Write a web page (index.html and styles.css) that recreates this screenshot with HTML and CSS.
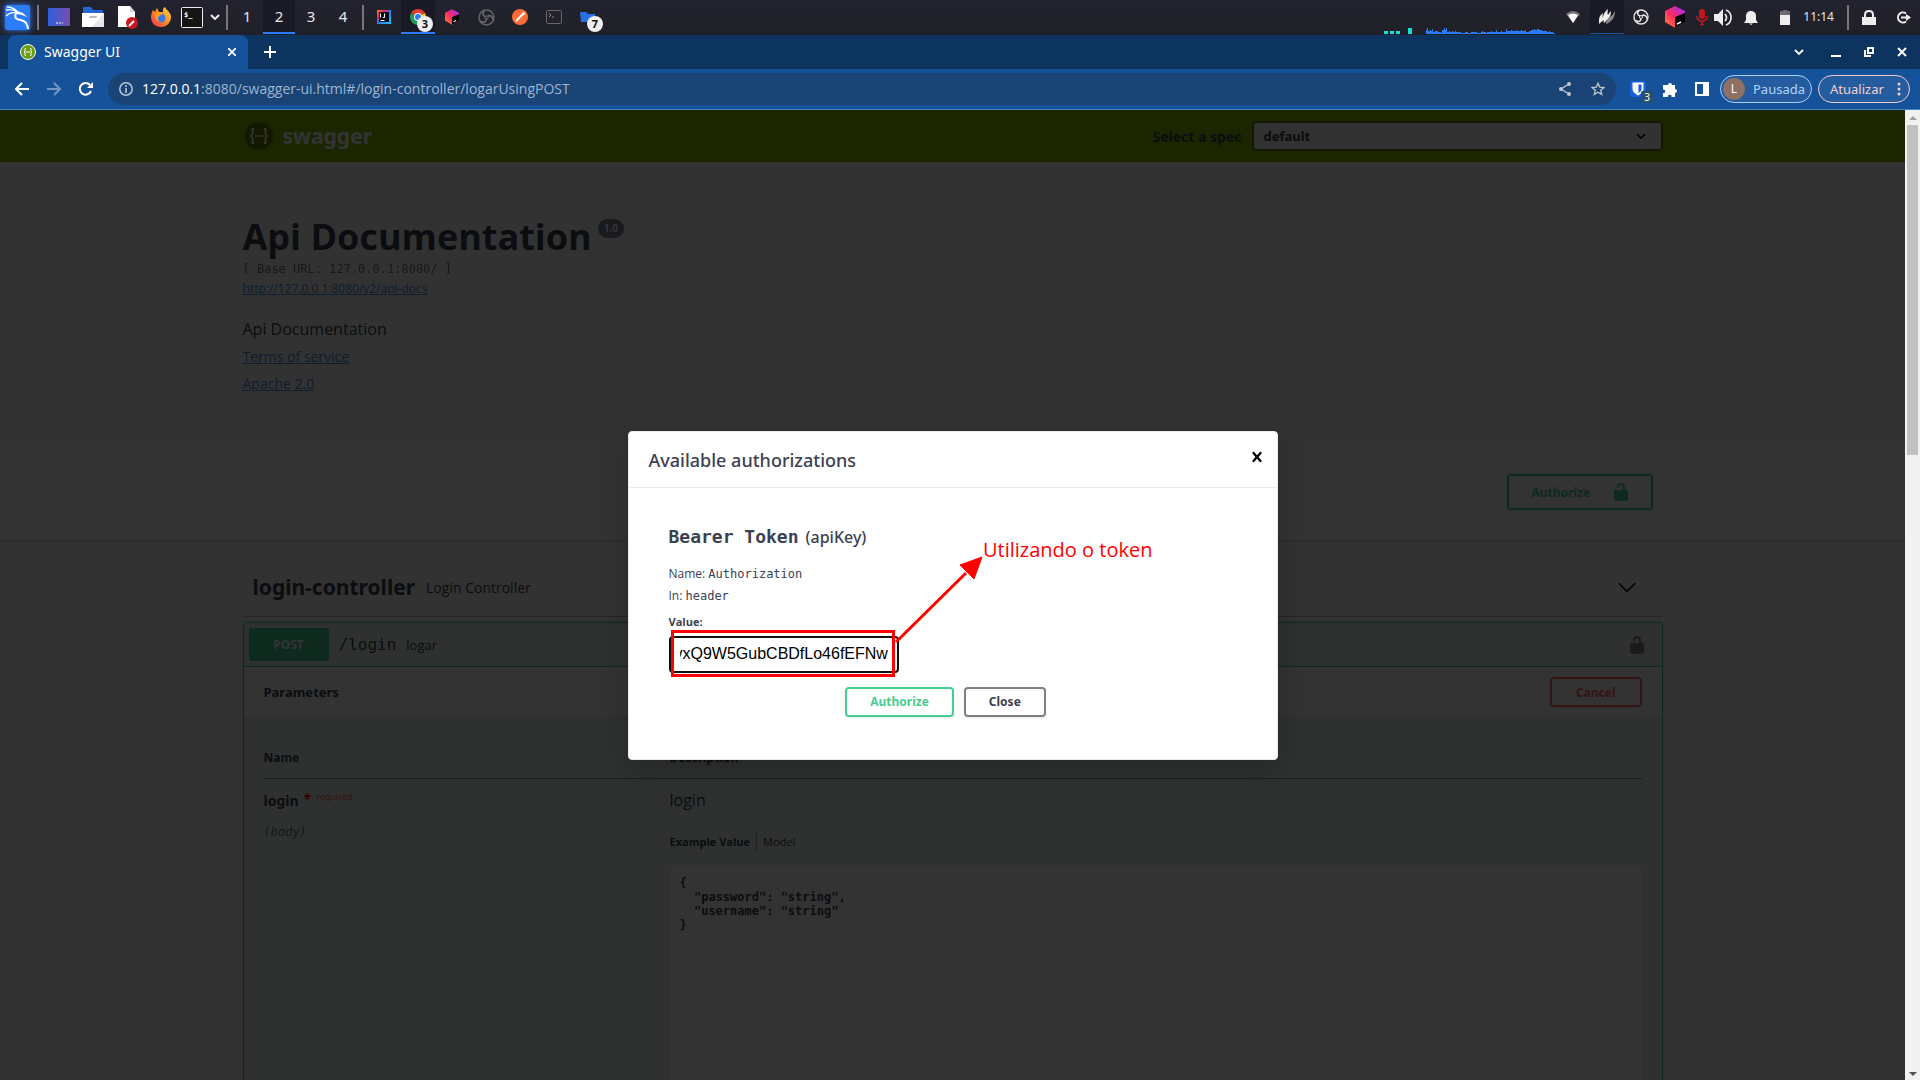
FILE: index.html
```html
<!DOCTYPE html>
<html lang="pt-BR">
<head>
<meta charset="utf-8">
<title>Swagger UI</title>
<link rel="stylesheet" href="styles.css">
</head>
<body>
<svg class="defs" aria-hidden="true">
  <symbol id="unlock" viewBox="0 0 20 20"><path d="M15.8 8H14V5.6C14 2.703 12.665 1 10 1 7.334 1 6 2.703 6 5.6V6h2v-.801C8 3.754 8.797 3 10 3c1.203 0 2 .754 2 2.199V8H4c-.553 0-1 .646-1 1.199V17c0 .549.428 1.139.951 1.307l1.197.387C5.672 18.861 6.55 19 7.1 19h5.8c.549 0 1.428-.139 1.951-.307l1.196-.387c.524-.167.953-.757.953-1.306V9.199C17 8.646 16.352 8 15.8 8z"/></symbol>
  <linearGradient id="g-desk" x1="0" y1="0" x2="1" y2="0"><stop offset="0" stop-color="#2c62dc"/><stop offset="1" stop-color="#7b4bb0"/></linearGradient>
  <linearGradient id="g-jb" x1="0" y1="1" x2="1" y2="0"><stop offset="0" stop-color="#ff8a2a"/><stop offset=".45" stop-color="#ff2b62"/><stop offset="1" stop-color="#9a2cff"/></linearGradient>
  <linearGradient id="g-ij" x1="0" y1="0" x2="1" y2="1"><stop offset="0" stop-color="#fc801d"/><stop offset=".3" stop-color="#e8265f"/><stop offset=".5" stop-color="#2b7cf6"/><stop offset="1" stop-color="#19c3f5"/></linearGradient>
  <linearGradient id="g-fox" x1="1" y1="0" x2="0" y2="1"><stop offset="0" stop-color="#ffe03a"/><stop offset=".5" stop-color="#ff8a20"/><stop offset="1" stop-color="#f2255a"/></linearGradient>
  <symbol id="cube" viewBox="0 0 20 22"><path d="M10 0l10 5v11l-10 6-10-6V5z" fill="url(#g-jb)"/><path d="M10 11l10-4v9l-10 6z" fill="#000"/><path d="M12 18l4-2" stroke="#fff" stroke-width="1.5"/></symbol>
  <symbol id="obs" viewBox="0 0 16 16"><g fill="none" stroke="currentColor"><circle cx="8" cy="8" r="7" stroke-width="1.400"/><path d="M7 7C4 6 4 3 6 2M9 7c2-2 5 0 5 3M8 9.500c0 3-3 4-5 2" stroke-width="1.600"/><circle cx="8" cy="8" r="1.500"/></g></symbol>
</svg>

<header class="taskbar">
  <button class="slot" aria-label="Applications"><svg class="kali" width="25" height="25" viewBox="0 0 25 25"><rect width="25" height="25" rx="2" fill="#2a7cf8"/><path d="M2 2c5 0 8 2 11 5M1 5c4-1 8 0 11 2M1 11c3-3 7-4 11-3" fill="none" stroke="#fff" stroke-width="1.300"/><path d="M13 7c-3 1-4 5-1 7 3 1 7 1 9 4 1 2 2 4 2 6" fill="none" stroke="#fff" stroke-width="2"/><path d="M12 6l6 2 4 4-5-2-5-1z" fill="#fff"/></svg></button>
  <i class="rule"></i>
  <button class="slot" aria-label="Desktop"><svg width="22" height="18" viewBox="0 0 22 18"><rect width="22" height="18" rx="1" fill="url(#g-desk)"/><path d="M8 15h2M11 15h2M14 15h1" stroke="#fff"/></svg></button>
  <button class="slot" aria-label="Files"><svg width="22" height="20" viewBox="0 0 22 20"><path d="M1 1q0-1 1-1h7l2 3h9q1 0 1 1v4H1z" fill="#2666d6"/><path d="M0 6h22v14H0z" fill="#fff"/><path d="M22 6v14H10z" fill="#e8e8e8"/><rect x="7" y="9" width="8" height="2" rx="1" fill="#bbb"/></svg></button>
  <button class="slot" aria-label="Text editor"><svg width="22" height="24" viewBox="0 0 22 24"><path d="M2 1h12l5 6v15H2z" fill="#fff"/><path d="M14 1l5 6h-5z" fill="#d5d5d5"/><circle cx="16" cy="18" r="6" fill="#c9171e"/><path d="M13 21l5-5" stroke="#fff" stroke-width="2"/></svg></button>
  <button class="slot" aria-label="Firefox"><svg width="22" height="22" viewBox="0 0 22 22"><path d="M11 21C5 21 1 17 1 11c0-3 1-5 2-7l2 2 2-4 2 4 4 0c0-3 0-4 2-5 1 3 6 5 6 10s-4 10-10 10z" fill="url(#g-fox)"/><circle cx="11" cy="12" r="4.500" fill="#3f78e8"/><path d="M5 8l5-2 3 2-4 2c-2 2-1 5 2 6-4 0-7-3-6-8z" fill="#ff9a20"/></svg></button>
  <button class="slot slot-term" aria-label="Terminal"><svg width="22" height="21" viewBox="0 0 22 21"><rect x=".5" y=".5" width="21" height="20" rx="1" fill="#151515" stroke="#eee"/><text class="prompt" x="3" y="10">$_</text></svg></button>
  <button class="slot slot-chev" aria-label="More terminals"><svg width="10" height="6" viewBox="0 0 10 6"><path d="M1 1l4 4 4-4" fill="none" stroke="#eee" stroke-width="2"/></svg></button>
  <i class="rule"></i>
  <nav class="spaces" aria-label="Workspaces">
    <button>1</button><button class="active">2</button><button>3</button><button>4</button>
  </nav>
  <i class="rule"></i>
  <button class="slot" aria-label="IntelliJ IDEA"><svg width="14" height="14" viewBox="0 0 14 14"><rect width="14" height="14" fill="url(#g-ij)"/><rect x="2" y="2" width="10" height="10" fill="#0a0a14"/><path d="M3.500 3.500v4M6 7.500h1.500v-4M3.500 10.500h4" fill="none" stroke="#fff"/></svg></button>
  <button class="slot active" aria-label="Chrome"><svg width="16" height="16" viewBox="0 0 16 16"><path d="M8 8L1.100 4A8 8 0 0 1 14.900 4z" fill="#e33b2e"/><path d="M8 8L14.900 4A8 8 0 0 1 8 16z" fill="#fcc934"/><path d="M8 8v8A8 8 0 0 1 1.100 4z" fill="#1e9b50"/><circle cx="8" cy="8" r="4" fill="#fff"/><circle cx="8" cy="8" r="3" fill="#2c78ee"/></svg><span class="count">3</span></button>
  <button class="slot" aria-label="JetBrains Toolbox"><svg width="14" height="16"><use href="#cube"/></svg></button>
  <button class="slot dim" aria-label="OBS"><svg width="17" height="17"><use href="#obs"/></svg></button>
  <button class="slot" aria-label="Postman"><svg width="16" height="16" viewBox="0 0 16 16"><circle cx="8" cy="8" r="8" fill="#ff6c37"/><path d="M4 12l7-7" stroke="#fff" stroke-width="2"/><circle cx="11.500" cy="4.500" r="1.500" fill="#fff"/></svg></button>
  <button class="slot" aria-label="Terminal window"><svg width="16" height="14" viewBox="0 0 16 14"><rect x=".5" y=".5" width="15" height="13" rx="1" fill="#22232c" stroke="#66666c"/><path d="M3 3l2 2-2 2M6 7h2" fill="none" stroke="#88888c"/></svg></button>
  <button class="slot" aria-label="File manager"><svg width="16" height="14" viewBox="0 0 16 14"><path d="M0 2h6l2 2h7v8H1z" fill="#2a6fe6"/></svg><span class="count">7</span></button>

  <div class="tray">
    <svg class="graph" width="172" height="7" viewBox="0 0 172 7" shape-rendering="crispEdges"><path d="M0 4h4v3H0zM6 4h4v3H6zM12 4h4v3h-4zM24 1h4v6h-4z" fill="#0fe0d0"/><path d="M42 7V3h1V1h1v3h2V3h1v1h1V2h1v3h2V4h3v1h3v1h1V3h2V1h1v2h1V1h1v4h2V4h1v1h2V4h1v1h2V4h1v1h5v1h4V5h3v1h3V5h6v1h4V5h1V4h1v1h3v1h1V5h4V4h1v1h4V3h1v2h4V4h1v1h4V2h1v2h4V3h1v1h4V3h1v1h4V3h1v1h3V3h1v2h3V4h2V3h3V2h1v1h2V2h2v1h3v1h5v1h2V4h1v1h3v1h2v1z" fill="#2a7cf8"/></svg>
    <button class="slot" aria-label="Network"><svg width="14" height="13" viewBox="0 0 14 13"><path d="M0 3Q7-3 14 3l-7 9z" fill="#777"/><path d="M2 4q5-3 10 0l-5 8z" fill="#fff"/></svg></button>
    <button class="slot active-soft" aria-label="Hawk"><svg width="16" height="16" viewBox="0 0 16 16"><path d="M7 15q-1-2 3-6 4-3 6-7 0 6-3 9t-6 4z" fill="#888"/><path d="M0 15V11q0-4 4-7-1 3 0 5 0-5 5-9-1 4 0 6 1-2 3-4 0 5-3 8t-4 4q-1-1 0-3-3 2-5 4z" fill="#eee"/></svg></button>
    <button class="slot" aria-label="OBS"><svg width="16" height="16"><use href="#obs"/></svg></button>
    <button class="slot" aria-label="Toolbox"><svg width="20" height="22"><use href="#cube"/></svg></button>
    <button class="slot slot-mic" aria-label="Microphone"><svg width="12" height="17" viewBox="0 0 12 17"><rect x="3" width="6" height="10" rx="3" fill="#c0181c"/><path d="M1 7q0 5 5 5t5-5M6 12v4M4 15.500h4" fill="none" stroke="#c0181c" stroke-width="1.600"/></svg></button>
    <button class="slot slot-vol" aria-label="Volume"><svg width="18" height="17" viewBox="0 0 18 17"><path d="M0 5h4l5-5v17l-5-5H0z" fill="#eee"/><path d="M11 5q3 3.500 0 7M12 1q5 2 5 7.500T12 16" fill="none" stroke="#eee" stroke-width="1.600"/></svg></button>
    <button class="slot" aria-label="Notifications"><svg width="14" height="15" viewBox="0 0 14 15"><path d="M6 1h2q4 1 4 5v4l2 3H0l2-3V6q0-4 4-5zM5 13.500h4L7 15z" fill="#eee"/></svg></button>
    <button class="slot" aria-label="Battery"><svg width="10" height="15" viewBox="0 0 10 15"><path d="M0 1h3V0h4v1h3v5H0z" fill="#6b6b70"/><path d="M0 5h10v10H0z" fill="#eee"/></svg></button>
    <time class="clock">11:14</time>
    <i class="rule"></i>
    <button class="slot" aria-label="Lock screen"><svg width="14" height="15" viewBox="0 0 14 15"><path d="M0 7h14v8H0z" fill="#eee"/><path d="M3 8V5q0-4 4-4t4 4v3" fill="none" stroke="#eee" stroke-width="2"/></svg></button>
    <button class="slot" aria-label="Log out"><svg width="15" height="13" viewBox="0 0 15 13"><path d="M10 2.500A5 5 0 1 0 10 10.500" fill="none" stroke="#eee" stroke-width="2"/><path d="M5 5.500h5V3l5 3.500L10 10V7.500H5z" fill="#eee"/></svg></button>
  </div>
</header>

<div class="tabstrip">
  <div class="tab">
    <svg width="16" height="16" viewBox="0 0 16 16"><circle cx="8" cy="8" r="7.500" fill="#6a9c10" stroke="#fff"/><path d="M6 4.500H5v3L4 8l1 .5v3h1M10 4.500h1v3l1 .5-1 .5v3h-1M6 8h4" fill="none" stroke="#fff"/></svg>
    <span class="tab-title">Swagger UI</span>
    <button aria-label="Close tab"><svg width="8" height="8" viewBox="0 0 8 8"><path d="M0 0l8 8M8 0L0 8" stroke="#fff" stroke-width="1.800"/></svg></button>
  </div>
  <button class="newtab" aria-label="New tab"><svg width="12" height="12" viewBox="0 0 12 12"><path d="M6 0v12M0 6h12" stroke="#fff" stroke-width="2"/></svg></button>
  <div class="wincontrols">
    <button aria-label="Search tabs"><svg width="10" height="7" viewBox="0 0 10 7"><path d="M1 1l4 4 4-4" fill="none" stroke="#fff" stroke-width="1.800"/></svg></button>
    <button aria-label="Minimize"><svg width="10" height="10" viewBox="0 0 10 10"><path d="M0 9h10" stroke="#fff" stroke-width="2"/></svg></button>
    <button aria-label="Restore"><svg width="10" height="10" viewBox="0 0 10 10"><path d="M4 1h5v5H4zM1 3v6h6" fill="none" stroke="#fff" stroke-width="2"/></svg></button>
    <button aria-label="Close window"><svg width="10" height="10" viewBox="0 0 10 10"><path d="M1 1l8 8M9 1L1 9" stroke="#fff" stroke-width="2"/></svg></button>
  </div>
</div>

<div class="toolbar">
  <button aria-label="Back"><svg width="14" height="14" viewBox="0 0 14 14"><path d="M14 7H1M7 1L1 7l6 6" fill="none" stroke="#fff" stroke-width="2"/></svg></button>
  <button aria-label="Forward"><svg width="14" height="14" viewBox="0 0 14 14"><path d="M0 7h13M7 1l6 6-6 6" fill="none" stroke="#7297c4" stroke-width="2"/></svg></button>
  <button aria-label="Reload"><svg width="14" height="14" viewBox="0 0 14 14"><path d="M12 9A5.800 5.800 0 1 1 11 3" fill="none" stroke="#fff" stroke-width="2"/><path d="M14 0v6H8z" fill="#fff"/></svg></button>
  <div class="omnibox">
    <svg width="14" height="14" viewBox="0 0 14 14"><circle cx="7" cy="7" r="6.200" fill="none" stroke="#b9c6d6" stroke-width="1.500"/><path d="M7 6v5M7 3v2" stroke="#b9c6d6" stroke-width="1.600"/></svg>
    <span class="url"><b>127.0.0.1</b>:8080/swagger-ui.html#/login-controller/logarUsingPOST</span>
    <button aria-label="Share"><svg width="12" height="14" viewBox="0 0 12 14"><path d="M10 2L2 7l8 5" fill="none" stroke="#c3c8ce" stroke-width="1.400"/><g fill="#c3c8ce"><circle cx="10" cy="2" r="2"/><circle cx="2" cy="7" r="2"/><circle cx="10" cy="12" r="2"/></g></svg></button>
    <button aria-label="Bookmark"><svg width="14" height="14" viewBox="0 0 14 14"><path d="M7 1.200l1.700 3.900 4.200.4-3.200 2.800 1 4.200L7 10.300l-3.700 2.200 1-4.200L1.100 5.500l4.200-.4z" fill="none" stroke="#c3c8ce" stroke-width="1.300"/></svg></button>
  </div>
  <button class="ext" aria-label="Bitwarden"><svg width="16" height="16" viewBox="0 0 16 16"><rect width="16" height="16" rx="2" fill="#175ddc"/><path d="M2.500 1.500h11V8c0 3-3 5-5.500 6.500C5.500 13 2.500 11 2.500 8z" fill="#fff"/><path d="M8.500 3.500h3V8c0 2-1.500 3-3 4z" fill="#175ddc"/></svg><span class="ext-count">3</span></button>
  <button class="ext" aria-label="Extensions"><svg width="15" height="15" viewBox="0 0 15 15"><path d="M1 3h4a2 2 0 1 1 4 0h3v4a2 2 0 1 1 0 4v4H8.500a1.800 1.800 0 1 0-3.500 0H0v-4a1.800 1.800 0 1 0 0-3.500V3z" fill="#fff"/></svg></button>
  <button class="ext" aria-label="Side panel"><svg width="14" height="14" viewBox="0 0 14 14"><path d="M0 0h14v14H0zM2 2v10h6V2z" fill="#fff" fill-rule="evenodd"/></svg></button>
  <button class="pill pill-user"><span class="avatar">L</span>Pausada</button>
  <button class="pill pill-update">Atualizar<svg width="4" height="14" viewBox="0 0 4 14"><g fill="#f6cfd0"><circle cx="2" cy="2" r="1.500"/><circle cx="2" cy="7" r="1.500"/><circle cx="2" cy="12" r="1.500"/></g></svg></button>
</div>

<div class="viewport">
  <div class="page">
    <div class="topbar">
      <div class="wrapper topbar-row">
        <a class="brand" href="#"><svg width="30" height="30" viewBox="0 0 30 30"><circle cx="15" cy="15" r="14" fill="#5b7f02"/><path d="M10 8H8.500v5L7 15l1.500 2v5H10M20 8h1.500v5l1.500 2-1.500 2v5H20" fill="none" stroke="#fff" stroke-width="1.800"/><path d="M11 15h2M14 15h2M17 15h2" stroke="#fff" stroke-width="2"/></svg>swagger</a>
        <label class="spec" for="spec">Select a spec</label>
        <div class="spec-box">
          <select id="spec"><option>default</option></select>
          <svg class="spec-arrow" width="20" height="20" viewBox="0 0 20 20"><path d="M13.418 7.859a.695.695 0 01.978 0 .68.68 0 010 .969l-3.908 3.830a.697.697 0 01-.979 0l-3.908-3.830a.68.68 0 010-.969.695.695 0 01.978 0L10 11l3.418-3.141z"/></svg>
        </div>
      </div>
    </div>

    <section class="wrapper info">
      <h1>Api Documentation<span class="version">1.0</span></h1>
      <pre class="base">[ Base URL: 127.0.0.1:8080/ ]</pre>
      <a class="docs" href="#">http://127.0.0.1:8080/v2/api-docs</a>
      <p>Api Documentation</p>
      <a class="meta" href="#">Terms of service</a>
      <a class="meta" href="#">Apache 2.0</a>
    </section>

    <div class="scheme">
      <div class="wrapper scheme-row">
        <button class="btn btn-green btn-top">Authorize<svg width="20" height="20"><use href="#unlock"/></svg></button>
      </div>
    </div>

    <section class="wrapper">
      <div class="tag">
        <h2>login-controller</h2><small>Login Controller</small>
        <svg width="20" height="20" viewBox="0 0 20 20"><path d="M17.418 6.109c.272-.268.709-.268.979 0s.271.701 0 .969l-7.908 7.830c-.27.268-.707.268-.979 0l-7.908-7.830c-.27-.268-.27-.701 0-.969.271-.268.709-.268.979 0L10 13.250l7.418-7.141z"/></svg>
      </div>
      <div class="opblock">
        <div class="summary">
          <span class="method">POST</span><span class="path">/login</span><span class="desc">logar</span>
          <svg class="oplock" width="20" height="20"><use href="#unlock"/></svg>
        </div>
        <div class="param-head"><h3>Parameters</h3><button class="btn btn-red">Cancel</button></div>
        <div class="params">
          <table>
            <thead><tr><th class="col-name">Name</th><th>Description</th></tr></thead>
            <tbody><tr>
              <td>
                <div class="pname">login<span class="star">*</span><span class="req">required</span></div>
                <div class="pin">(body)</div>
              </td>
              <td>
                <p class="pdesc">login</p>
                <ul class="modes"><li class="on">Example Value</li><li>Model</li></ul>
                <pre class="example">{
  "password": "string",
  "username": "string"
}</pre>
              </td>
            </tr></tbody>
          </table>
        </div>
      </div>
    </section>
  </div>

  <div class="backdrop">
    <div class="modal" role="dialog" aria-labelledby="mtitle">
      <div class="modal-head">
        <h3 id="mtitle">Available authorizations</h3>
        <button aria-label="Close"><svg width="20" height="20" viewBox="0 0 20 20"><path d="M14.348 14.849c-.469.469-1.229.469-1.697 0L10 11.819l-2.651 3.029c-.469.469-1.229.469-1.697 0-.469-.469-.469-1.229 0-1.697l2.758-3.150-2.759-3.152c-.469-.469-.469-1.228 0-1.697.469-.469 1.228-.469 1.697 0L10 8.183l2.651-3.031c.469-.469 1.228-.469 1.697 0 .469.469.469 1.229 0 1.697l-2.758 3.152 2.758 3.150c.469.469.469 1.229 0 1.698z"/></svg></button>
      </div>
      <form class="modal-body">
        <h4><code>Bearer Token</code><span>(apiKey)</span></h4>
        <p>Name: <code>Authorization</code></p>
        <p>In: <code>header</code></p>
        <label for="token">Value:</label>
        <input id="token" type="text" value="vxQ9W5GubCBDfLo46fEFNw">
        <div class="actions"><button type="button" class="btn btn-green">Authorize</button><button type="button" class="btn">Close</button></div>
      </form>
      <svg class="note" width="650" height="327" viewBox="0 0 650 327">
        <rect x="44.500" y="200.500" width="221" height="44" fill="none" stroke="#f00" stroke-width="3"/>
        <path d="M268 211l70-69" stroke="#f00" stroke-width="3"/>
        <path d="M354 126l-8 22-14-14z" fill="#f00" stroke="#f00"/>
        <text x="355" y="126">Utilizando o token</text>
      </svg>
    </div>
  </div>

  <div class="scrollbar"><i class="up"></i><i class="thumb"></i><i class="down"></i></div>
</div>
<script src="app.js"></script>
</body>
</html>
```
FILE: app.js
```js
// Show the end of the token, as it is after pasting.
const token = document.getElementById('token');
token.scrollLeft = token.scrollWidth;
```
FILE: styles.css
```css
* { box-sizing: border-box; }
body {
  margin: 0;
  height: 100vh;
  display: flex;
  flex-direction: column;
  overflow: hidden;
  font-family: "Open Sans", sans-serif;
  color: #3b4151;
}
button { font: inherit; color: inherit; background: none; border: 0; padding: 0; }
h1, h2, h3, h4, p, ul, pre { margin: 0; padding: 0; }
svg { display: block; flex: none; }
code, pre, .path, .pin { font-family: "DejaVu Sans Mono", monospace; }
.defs { position: absolute; width: 0; height: 0; }

/* Desktop panel */
.taskbar {
  flex: none;
  height: 35px;
  display: flex;
  align-items: center;
  padding-bottom: 1px;
  background: linear-gradient(#22232f, #202028);
  color: #e6e6e6;
}
.slot {
  position: relative;
  width: 34px;
  height: 34px;
  display: flex;
  align-items: center;
  justify-content: center;
}
.slot-term { width: 28px; }
.slot-chev { width: 17px; }
.slot-mic { width: 20px; }
.slot-vol { width: 22px; }
.slot.active, .spaces .active { background: #1a1a26; box-shadow: inset 0 -2px #2a7cf8; }
.active-soft { background: #1a1a26; box-shadow: inset 0 -1px #1c549e; }
.dim { color: #66676c; }
.kali { filter: drop-shadow(0 0 3px #2a7cf8); }
.prompt { font: bold 7px "DejaVu Sans Mono", monospace; fill: #fff; }
.rule { flex: none; width: 2px; height: 25px; margin: 0 3px; background: #77777c; }
.spaces { display: flex; }
.spaces button { width: 32px; height: 34px; padding-bottom: 2px; font: 15px "Noto Sans", sans-serif; }
.count {
  position: absolute;
  left: 16px;
  top: 16px;
  width: 16px;
  height: 16px;
  border-radius: 8px;
  background: #eee;
  color: #111;
  font: bold 11px/16px "Noto Sans", sans-serif;
  text-align: center;
}
.tray { display: flex; align-items: center; margin-left: auto; }
.graph { align-self: flex-end; }
.clock { font: 12px "Noto Sans", sans-serif; margin: 0 10px 0 1px; padding-bottom: 1px; }

/* Browser frame */
.tabstrip {
  flex: none;
  height: 34px;
  display: flex;
  align-items: center;
  padding-left: 8px;
  background: #0d345f;
}
.tab {
  width: 240px;
  height: 34px;
  display: flex;
  align-items: center;
  gap: 8px;
  padding: 0 12px;
  border-radius: 8px 8px 0 0;
  background: #15529a;
  color: #fff;
}
.tab-title { flex: 1; padding-bottom: 2px; font: 14px "Noto Sans", sans-serif; }
.newtab { margin-left: 16px; }
.wincontrols { margin-left: auto; display: flex; padding-right: 2px; }
.wincontrols button { width: 33px; height: 20px; display: grid; place-items: center; }
.wincontrols button:first-child { margin-right: 4px; }
.toolbar {
  flex: none;
  height: 41px;
  display: flex;
  align-items: center;
  padding: 0 10px 0 6px;
  background: #15529a;
  border-bottom: 1px solid #4684c4;
}
.toolbar > button:not(.pill) { position: relative; width: 32px; height: 32px; display: grid; place-items: center; }
.omnibox {
  flex: 1;
  height: 32px;
  display: flex;
  align-items: center;
  margin: 0 6px;
  padding: 0 11px;
  border-radius: 16px;
  background: #1a4475;
}
.omnibox button { margin-left: 20px; }
.url { flex: 1; margin-left: 9px; padding-bottom: 1px; font: 14px "Open Sans", sans-serif; color: #9db5d2; }
.url b { font-weight: 400; color: #fff; }
.ext-count {
  position: absolute;
  right: 1px;
  bottom: 2px;
  width: 12px;
  height: 12px;
  border-radius: 2px;
  background: #29506a;
  color: #fff;
  font: 10px/12px "Noto Sans", sans-serif;
}
.pill {
  height: 28px;
  display: flex;
  align-items: center;
  border: 1px solid #a9d0fa;
  border-radius: 14px;
  background: #255c9f;
  font: 13px "Noto Sans", sans-serif;
}
.pill-user { width: 92px; gap: 8px; padding-left: 2px; margin: 0 6px 0 2px; color: #b0d4fa; }
.pill-update { width: 92px; gap: 13px; padding-left: 11px; color: #f6cfd0; border-color: #f0cdd2; }
.avatar { width: 22px; height: 22px; border-radius: 11px; background: #8f7065; color: #fff; font-size: 12px; line-height: 22px; }

/* Document */
.viewport { position: relative; flex: 1; min-height: 0; display: flex; }
.page { flex: 1; overflow: hidden; background: #fafafa; }
.wrapper { max-width: 1460px; margin: 0 auto; padding: 0 20px; }
.topbar { background: #89bf04; padding: 11px 0; }
.topbar-row { display: flex; align-items: center; }
.brand {
  flex: 1;
  display: flex;
  align-items: center;
  gap: 9px;
  padding-left: 1px;
  font: bold 21px/30px "Noto Sans", sans-serif;
  color: #fff;
  text-decoration: none;
}
.spec { font: bold 14px "Noto Sans", sans-serif; margin-right: 10px; }
.spec-box { position: relative; width: 411px; }
.spec-box select {
  display: block;
  width: 100%;
  height: 30px;
  padding: 0 10px;
  appearance: none;
  border: 2px solid #547f00;
  border-radius: 4px;
  background: #f7f7f7;
  color: #3b4151;
  font: bold 13px "Noto Sans", sans-serif;
}
.spec-arrow { position: absolute; right: 12px; top: 5px; }
.info { padding-top: 50px; padding-bottom: 47px; }
.info h1 { display: flex; font-size: 36px; line-height: 49px; font-weight: 700; }
.version {
  height: 19px;
  margin: 7px 0 0 6px;
  padding: 0 6px;
  border-radius: 10px;
  background: #7d8492;
  color: #fff;
  font-size: 10px;
  line-height: 19px;
}
.base { font-size: 12px; line-height: 16px; color: #3b4151; }
.base, .pin { opacity: .7; }
.info a { display: block; width: max-content; color: #4990e2; text-decoration: underline; }
.docs { font-size: 12px; line-height: 24px; }
.info p { font-size: 16px; line-height: 22px; margin: 17px 0 3px; }
.meta { font-size: 14px; line-height: 27px; }
.scheme { background: #fff; padding: 30px 0; box-shadow: 0 1px 2px rgba(0, 0, 0, .15); }
.scheme-row { display: flex; justify-content: flex-end; }
.btn {
  height: 30px;
  padding: 0 23px;
  border: 2px solid gray;
  border-radius: 4px;
  box-shadow: 0 1px 2px rgba(0, 0, 0, .1);
  font: bold 12px "Noto Sans", sans-serif;
}
.btn-green { border-color: #49cc90; color: #49cc90; }
.btn-red { border-color: #ff6060; color: #ff6060; padding: 0 24px; }
.btn svg { fill: currentColor; }
.btn-top { width: 146px; height: 36px; display: flex; align-items: center; justify-content: space-between; margin-right: 10px; padding-right: 20px; }
.tag {
  display: flex;
  align-items: center;
  height: 57px;
  margin-top: 20px;
  padding: 0 26px 2px 10px;
  border-bottom: 1px solid rgba(59, 65, 81, .3);
}
.tag h2 { font: bold 21px "Noto Sans", sans-serif; }
.tag small { flex: 1; margin-left: 11px; font-size: 14px; }
.opblock {
  margin-top: 5px;
  border: 1px solid #49cc90;
  border-radius: 4px;
  background: rgba(73, 204, 144, .1);
  box-shadow: 0 0 3px rgba(0, 0, 0, .19);
}
.summary { display: flex; align-items: center; height: 44px; padding: 5px; border-bottom: 1px solid #49cc90; }
.method {
  width: 80px;
  border-radius: 3px;
  background: #49cc90;
  color: #fff;
  font: bold 12px/33px "Noto Sans", sans-serif;
  text-align: center;
}
.path { margin: 0 10px; font-size: 16px; font-weight: 500; }
.desc { flex: 1; font-size: 13px; }
.oplock { margin-right: 10px; fill: #888; }
.param-head {
  display: flex;
  align-items: center;
  justify-content: space-between;
  height: 50px;
  padding: 0 20px;
  background: #fff;
  box-shadow: 0 1px 2px rgba(0, 0, 0, .1);
}
.param-head h3 { font: bold 13px "Noto Sans", sans-serif; }
.params { padding: 20px; }
table { width: 100%; border-collapse: collapse; }
th { height: 41px; padding: 11px 0 9px; text-align: left; font: bold 12px/20px "Noto Sans", sans-serif; border-bottom: 1px solid rgba(59, 65, 81, .3); }
td { padding: 9px 0 0; vertical-align: top; }
.col-name { width: 406px; }
.pname { display: flex; gap: 5px; font: bold 14px/26px "Noto Sans", sans-serif; }
.star { color: #f00; line-height: 22px; }
.req { color: #f66; font-size: 9px; line-height: 17px; font-weight: 400; }
.pin { font-size: 12px; line-height: 16px; font-style: italic; margin-top: 10px; }
.pdesc { font-size: 16px; line-height: 24px; }
.modes { display: flex; margin: 20px 0 15px; list-style: none; font: 11px/19px "Open Sans", sans-serif; }
.modes .on { font-weight: 700; padding-right: 6px; margin-right: 6px; border-right: 1px solid rgba(59, 65, 81, .4); }
.example { height: 352px; padding: 10px; border-radius: 4px; background: #fff; font-size: 12px; line-height: 14px; font-weight: 600; }

/* Authorization dialog */
.backdrop {
  position: absolute;
  inset: 0 15px 0 0;
  display: grid;
  place-items: center;
  background: rgba(0, 0, 0, .8);
}
.modal {
  position: relative;
  width: 650px;
  border: 1px solid #ebebeb;
  border-radius: 4px;
  background: #fff;
  box-shadow: 0 10px 30px rgba(0, 0, 0, .2);
}
.modal-head { display: flex; justify-content: space-between; height: 56px; padding: 15px 10px 0 20px; border-bottom: 1px solid #ebebeb; }
.modal-head h3 { font: 500 18px/26px "Noto Sans", sans-serif; }
.modal-head button { align-self: flex-start; }
.modal-body { padding: 34px 40px 42px; }
.modal-body h4 { display: flex; gap: 7px; align-items: baseline; margin-bottom: 11px; font: 500 16px/30px "Noto Sans", sans-serif; }
.modal-body h4 code { font-size: 18px; font-weight: 700; }
.modal-body p { font-size: 12px; line-height: 22px; }
.modal-body label { display: block; margin-top: 5px; font: bold 11px/20px "Open Sans", sans-serif; }
.modal-body input {
  display: block;
  width: 230px;
  height: 37px;
  margin-top: 4px;
  padding: 0 9px;
  border: 2px solid #101010;
  border-radius: 4px;
  background: #fff;
  color: #000;
  font: 16px "Liberation Sans", sans-serif;
}
.actions { display: flex; justify-content: center; gap: 10px; margin: 14px 14px 0 0; }
.note { position: absolute; left: -1px; top: -1px; pointer-events: none; }
.note text { font: 20px "Open Sans", sans-serif; fill: #f00; }

.scrollbar { width: 15px; display: flex; flex-direction: column; align-items: center; background: #f1f1f1; }
.up, .down { border: 4px solid transparent; }
.up { margin-top: 2px; border-bottom-color: #a0a0a0; }
.down { margin-top: auto; border-top-color: #505050; }
.thumb { width: 11px; height: 34%; margin-top: 5px; background: #c1c1c1; }
```
